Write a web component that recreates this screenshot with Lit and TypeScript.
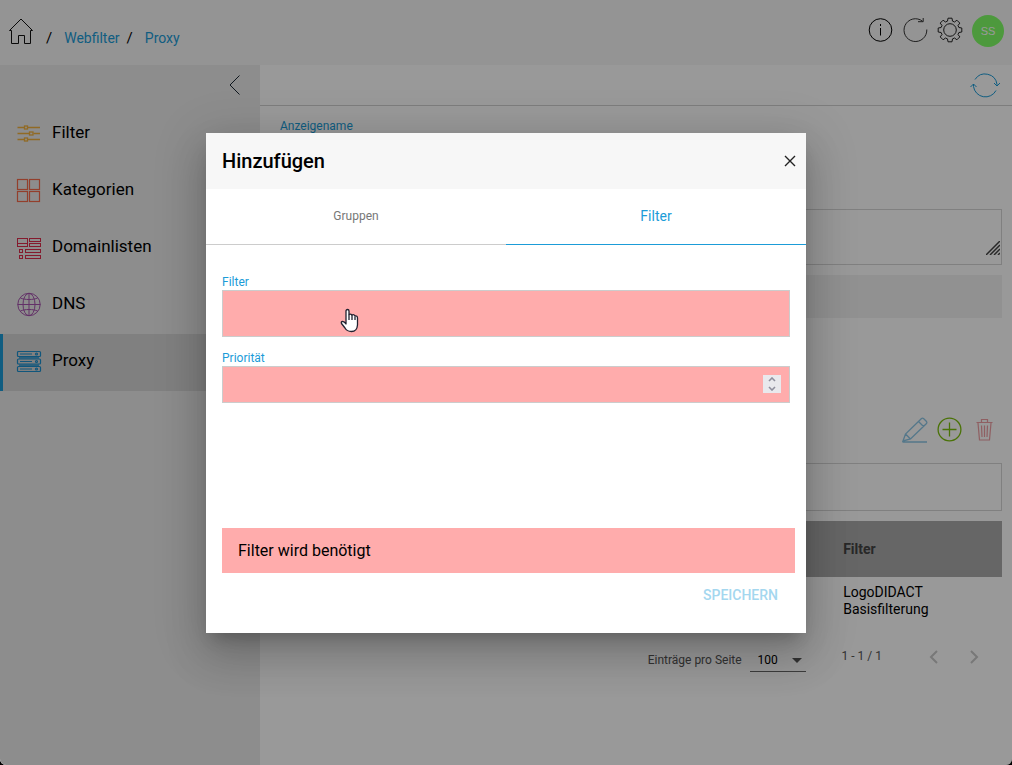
import { LitElement, html, css, svg } from "lit";
import { customElement, state } from "lit/decorators.js";
import { classMap } from "lit/directives/class-map.js";

const navIcons = {
  filter: svg`<g stroke="#f2b13c" stroke-width="1.3"><path d="M1.500 6.500H8M12 6.500H24M1.500 12.500H13.500M17.500 12.500H24M1.500 18.500H8M12 18.500H24"/><rect x="8.500" y="5" width="3" height="3"/><rect x="13.500" y="11" width="3.500" height="3"/><rect x="8.500" y="17" width="3" height="3"/></g>`,
  categories: svg`<g stroke="#f5694a" stroke-width="1.2"><rect x="1.5" y="1.5" width="10" height="10"/><rect x="13.5" y="1.5" width="10" height="10"/><rect x="1.5" y="13.5" width="10" height="10"/><rect x="13.5" y="13.5" width="10" height="10"/></g>`,
  domains: svg`<g stroke="#dc2c4c"><rect x="1.5" y="3.5" width="10" height="8"/><path d="M2 8l1 1 1-1 1 1 1-1 1 1 1-1 1 1 1-1 1 1"/><rect x="13.5" y="3.5" width="11" height="3"/><rect x="13.5" y="8.5" width="11" height="3"/><rect x="3.5" y="14.5" width="3" height="3"/><rect x="9.5" y="14.5" width="15" height="3"/><rect x="3.5" y="20.5" width="3" height="3"/><rect x="9.5" y="20.5" width="15" height="3"/></g>`,
  dns: svg`<g stroke="#a552ad"><circle cx="13" cy="12.5" r="11.200"/><ellipse cx="13" cy="12.5" rx="6" ry="11.200"/><path d="M13 1.5v22M1.500 12.500h23M4.500 6c4 2 13 2 17 0M4.500 19c4-2 13-2 17 0"/></g>`,
  proxy: svg`<g stroke="#1b90cf" stroke-width="1.2"><rect x="1.5" y="2.5" width="23" height="5" rx="1"/><rect x="1.5" y="10" width="23" height="5" rx="1"/><rect x="1.5" y="17.5" width="23" height="5" rx="1"/><path d="M4 5h12M4 12.5h12M4 20h12M3 8.8h20M3 16.2h20"/><circle cx="20.5" cy="5" r="1"/><circle cx="20.5" cy="12.5" r="1"/><circle cx="20.5" cy="20" r="1"/></g>`,
};

const navItems = [
  { label: "Filter", icon: navIcons.filter },
  { label: "Kategorien", icon: navIcons.categories },
  { label: "Domainlisten", icon: navIcons.domains },
  { label: "DNS", icon: navIcons.dns },
  { label: "Proxy", icon: navIcons.proxy, active: true },
];

const gear = (() => {
  const teeth = 8;
  const points: string[] = [];
  for (let i = 0; i < teeth; i++) {
    const base = (i * 2 * Math.PI) / teeth;
    for (const [offset, radius] of [[-0.27, 9.2], [-0.17, 12], [0.17, 12], [0.27, 9.2]]) {
      const a = base + offset;
      points.push(`${(13 + radius * Math.sin(a)).toFixed(1)} ${(13 - radius * Math.cos(a)).toFixed(1)}`);
    }
  }
  return `M${points.join("L")}Z`;
})();

@customElement("app-root")
export class AppRoot extends LitElement {
  @state() private tab = "Filter";

  static styles = css`
    :host {
      display: block;
      background: #000;
      font-family: Roboto, "Liberation Sans", sans-serif;
      font-size: 14px;
      line-height: 20px;
      color: #000;
    }
    *, *::before, *::after { box-sizing: border-box; }
    button, input, select, textarea { font: inherit; color: inherit; margin: 0; border-radius: 0; }
    button { background: none; border: 0; padding: 0; cursor: pointer; }
    a { color: inherit; text-decoration: none; }
    svg { display: block; fill: none; stroke-width: 1; flex: none; }

    .page {
      position: relative;
      display: flex;
      flex-direction: column;
      min-height: 100vh;
      background: #fff;
      border-radius: 0 0 6px 6px;
      overflow: hidden;
    }
    .topbar {
      display: flex;
      align-items: center;
      justify-content: space-between;
      height: 65px;
      padding: 0 8px;
      background: #f7f7f7;
    }
    .crumbs { display: flex; align-items: center; padding-bottom: 2px; }
    .crumbs ol { display: flex; list-style: none; margin: 0; padding: 12px 0 0; }
    .crumbs li { color: #1b9cd8; }
    .crumbs li::before { content: "/"; color: #000; font-size: 15px; padding: 0 12px; }
    .crumbs li + li::before { padding-left: 7px; }
    .tools { display: flex; align-items: center; gap: 9px; padding-bottom: 4px; }
    .tools button { padding-bottom: 2px; }
    .tools .avatar {
      width: 32px;
      height: 32px;
      padding: 0;
      border-radius: 50%;
      background: #80ff66;
      color: #fff;
      font-family: "Liberation Sans", sans-serif;
      font-size: 11px;
    }
    .columns { display: flex; flex: 1; }
    .sidebar { width: 260px; background: #ebebeb; }
    .collapse { display: flex; justify-content: flex-end; align-items: flex-start; height: 41px; padding: 9px 18px 0 0; }
    .nav-item {
      display: flex;
      align-items: center;
      gap: 9px;
      height: 57px;
      padding: 0 0 2px 13px;
      border-left: 3px solid transparent;
      font-size: 17px;
    }
    .nav-item span { padding-bottom: 3px; }
    .nav-item.active { background: #d5d5d5; border-color: #1b9cd8; }

    .content { flex: 1; min-width: 0; }
    .toolbar { display: flex; justify-content: flex-end; align-items: center; height: 41px; padding-right: 12px; border-bottom: 1px solid #d0d0d0; }
    .form { display: flex; flex-direction: column; padding: 10px 10px 0 20px; }
    .label { color: #1b9cd8; font-size: 12px; line-height: 20px; }
    .box { display: block; width: 100%; border: 1px solid #d5d5d5; background: #fff; padding: 8px; }
    .name { width: 50%; height: 48px; margin-bottom: 25px; }
    .note { height: 56px; resize: none; }
    .note-wrap { position: relative; margin-bottom: 10px; }
    .grip { position: absolute; right: 2px; bottom: 10px; }
    .band { height: 43px; background: #f2f2f2; }
    .actions { display: flex; justify-content: flex-end; gap: 9px; padding: 99px 4px 20px 0; }
    .faded { opacity: .5; }
    .search { height: 48px; margin-bottom: 10px; }
    table { width: 100%; border-collapse: collapse; table-layout: fixed; text-align: left; }
    col.wide { width: 78%; }
    th { height: 56px; padding: 0; background: #aaa; color: #444; font-weight: 700; }
    td { height: 48px; padding: 0 24px 0 0; line-height: 17px; }
    .pager { display: flex; align-items: center; justify-content: flex-end; height: 64px; padding-right: 8px; font-size: 12px; color: #555; }
    .size { position: relative; display: flex; align-items: center; width: 56px; margin: 5px 36px 0 8px; border-bottom: 1px solid #666; color: #000; }
    .size select { appearance: none; width: 100%; height: 24px; padding: 1px 8px 0; border: 0; background: none; }
    .size svg { position: absolute; right: 4px; bottom: 8px; fill: #555; pointer-events: none; }
    .size-label { padding-top: 6px; }
    .range { margin-right: 32px; padding-bottom: 2px; }
    .pager button { display: grid; place-items: center; width: 40px; height: 40px; }

    .overlay {
      position: absolute;
      inset: 0;
      display: flex;
      align-items: center;
      justify-content: center;
      background: rgba(0, 0, 0, .4);
    }
    .dialog {
      width: 600px;
      max-width: 80vw;
      min-height: 500px;
      display: flex;
      flex-direction: column;
      background: #fff;
      box-shadow: 0 11px 15px -7px rgba(0, 0, 0, .2), 0 24px 38px 3px rgba(0, 0, 0, .14), 0 9px 46px 8px rgba(0, 0, 0, .12);
    }
    .dialog header {
      display: flex;
      align-items: center;
      justify-content: space-between;
      height: 56px;
      padding: 0 10px 0 16px;
      background: #f7f7f7;
    }
    h2 { margin: 0; font-size: 20px; font-weight: 500; line-height: 28px; }
    .tabs { display: flex; }
    .tab { flex: 1; height: 56px; border-bottom: 1px solid #ccc; color: #777; font-size: 12px; }
    .tab.current { color: #1b9cd8; font-size: 14px; border-color: #1b9cd8; }
    .fields { display: flex; flex-direction: column; padding: 29px 16px 0; }
    .fields label { color: #1b9cd8; font-size: 12px; line-height: 16px; }
    .field { position: relative; display: flex; align-items: center; border: 1px solid #ccc; background: #ffacac; }
    .field.pick { height: 47px; margin-bottom: 13px; }
    .field.count { height: 37px; padding-right: 8px; }
    .field select, .field input { flex: 1; min-width: 0; height: 100%; appearance: none; border: 0; outline: 0; background: none; padding: 0 8px; }
    .field input::-webkit-inner-spin-button { display: none; }
    .spin { display: flex; flex-direction: column; width: 18px; height: 18px; background: #e9e9ed; }
    .spin button { flex: 1; display: grid; place-items: center; }
    .hand { position: absolute; left: 117px; top: 17px; pointer-events: none; }
    .foot { margin-top: auto; padding: 0 11px 20px 16px; }
    .alert { margin: 0; padding: 13px 16px 12px; background: #ffacac; font-size: 16px; }
    .save { display: flex; justify-content: flex-end; padding: 4px 1px 0 0; }
    .save button { height: 36px; padding: 0 16px; color: #a4d7ef; font-weight: 500; }
  `;

  render() {
    return html`
      <div class="page">
        <header class="topbar">
          <nav class="crumbs">
            <a href="#" aria-label="Home"><svg width="26" height="28" viewBox="0 1 26 28" stroke="#111" stroke-width="1.2"><path d="M1.500 13.500L13 2l11.500 11.500H22.500V26.500H16.500V18.500H10.500V26.500H3.500V13.500Z"/></svg></a>
            <ol>
              <li><a href="#">Webfilter</a></li>
              <li><a href="#">Proxy</a></li>
            </ol>
          </nav>
          <div class="tools">
            <button aria-label="Info"><svg width="26" height="26" viewBox="0 0 26 26" stroke="#000" stroke-width="1.3"><circle cx="13.500" cy="13" r="11.300"/><path d="M13.500 11v7.500M13.500 7v2"/></svg></button>
            <button aria-label="Reload"><svg width="26" height="26" viewBox="0 0 26 26" stroke="#333"><path d="M24.800 12.500A11.400 11.400 0 1 1 20.500 4.200M16 4.700H21.200V1"/></svg></button>
            <button aria-label="Settings"><svg width="26" height="26" viewBox="0 0 26 26" stroke="#222"><path stroke-linejoin="round" d=${gear}/><circle cx="13" cy="13" r="6.300"/></svg></button>
            <button class="avatar">SS</button>
          </div>
        </header>
        <div class="columns">
          <aside class="sidebar">
            <div class="collapse">
              <button aria-label="Collapse"><svg width="14" height="22" viewBox="0 0 14 22" stroke="#1a2733" stroke-width="1.3"><path d="M11.500 1.500L2 11l9.500 9.500"/></svg></button>
            </div>
            <nav>
              ${navItems.map((item) => html`
                <a href="#" class=${classMap({ "nav-item": true, active: !!item.active })}>
                  <svg width="27" height="26" viewBox="0 0 27 26">${item.icon}</svg><span>${item.label}</span>
                </a>`)}
            </nav>
          </aside>
          <main class="content">
            <div class="toolbar">
              <button aria-label="Refresh"><svg width="30" height="28" viewBox="0 0 30 28" stroke="#1b9cd8" stroke-width="1.3"><path d="M5 8.500A12 12 0 0 1 27 13.500V15M24 12l3 3 3-3M26 19.500A12 12 0 0 1 3.500 15.500V13M.500 16l3-3 3 3"/></svg></button>
            </div>
            <div class="form">
              <label class="label" for="name">Anzeigename</label>
              <input class="box name" id="name">
              <div class="note-wrap">
                <textarea class="box note" aria-label="Note"></textarea>
                <svg class="grip" width="14" height="14" viewBox="0 0 14 14" stroke="#444"><path stroke-width="1.5" d="M0 14L14 0M4 14L14 4M8 14l6-6M12 14l2-2"/></svg>
              </div>
              <div class="band"></div>
              <div class="actions">
                <button class="faded" aria-label="Edit"><svg width="26" height="26" viewBox="1 0 26 26" stroke="#1b90cf"><path stroke-width="1.3" d="M1.500 25H26M2 24L4.500 17L20.500 1.500Q21.500 .700 22.500 1.500L25.500 4.500Q26.200 5.500 25.500 6.500L9.500 22ZM4.500 17L9.500 22M17.500 4.500L22.500 9.500"/></svg></button>
                <button aria-label="Add"><svg width="26" height="26" viewBox="0 0 26 26" stroke="#7cbf0c"><circle stroke-width="1.300" cx="12.500" cy="12.500" r="11.400"/><path stroke-width="1.300" d="M12.500 5.500v14M5.500 12.500h14"/></svg></button>
                <button class="faded" aria-label="Delete"><svg width="26" height="26" viewBox="0 0 26 26" stroke="#e0404a"><path stroke-width="1.200" d="M4.500 5.500h16M9.500 5V2.500h6V5M6 6l1.500 17h10L19 6M9.500 8.500l.500 11.500M12.500 8.500V20M15.500 8.500L15 20"/></svg></button>
              </div>
              <input class="box search" aria-label="Search">
              <table>
                <colgroup><col class="wide"><col></colgroup>
                <thead><tr><th></th><th scope="col">Filter</th></tr></thead>
                <tbody><tr><td></td><td>LogoDIDACT Basisfilterung</td></tr></tbody>
              </table>
              <div class="pager">
                <label class="size-label" for="size">Einträge pro Seite</label>
                <span class="size">
                  <select id="size"><option>100</option></select>
                  <svg width="10" height="5" viewBox="0 0 10 5"><path d="M0 0h10L5 5z"/></svg>
                </span>
                <span class="range">1 - 1 / 1</span>
                <button aria-label="Previous"><svg width="10" height="14" viewBox="0 0 10 14" stroke="#c8c8c8"><path stroke-width="2" d="M8 1L2 7l6 6"/></svg></button>
                <button aria-label="Next"><svg width="10" height="14" viewBox="0 0 10 14" stroke="#c8c8c8"><path stroke-width="2" d="M2 1l6 6-6 6"/></svg></button>
              </div>
            </div>
          </main>
        </div>

        <div class="overlay">
          <section class="dialog" role="dialog" aria-labelledby="title">
            <header>
              <h2 id="title">Hinzufügen</h2>
              <button aria-label="Close"><svg width="12" height="12" viewBox="0 0 12 12" stroke="#222"><path stroke-width="1.4" d="M1 1l10 10M11 1L1 11"/></svg></button>
            </header>
            <div class="tabs" role="tablist">
              ${["Gruppen", "Filter"].map((name) => html`
                <button role="tab" class=${classMap({ tab: true, current: this.tab === name })} @click=${() => (this.tab = name)}>${name}</button>`)}
            </div>
            <div class="fields">
              <label for="filter">Filter</label>
              <div class="field pick">
                <select id="filter"></select>
                <svg class="hand" width="20" height="26" viewBox="0 0 20 26" stroke="#222230" stroke-linejoin="round"><path fill="#fff" stroke-width="1.3" d="M6 15V3Q6 1.500 7.500 1.500T9 3V6.500Q10.500 5.500 12 7Q14 6 15 8Q17.500 7.500 17.500 10V17Q17 23.500 11.500 23.500Q7 23.500 5 20L1.500 15.500Q.800 13.500 2.500 13.300Q4.500 13.500 6 16Z"/><path stroke-width="1.300" d="M9 6.500V12M12 7V12M15 8.500V12"/></svg>
              </div>
              <label for="priority">Priorität</label>
              <div class="field count">
                <input id="priority" type="number">
                <span class="spin">
                  <button aria-label="Up"><svg width="8" height="5" viewBox="0 0 8 5" stroke="#8f8f9d"><path stroke-width="1.600" d="M1 4l3-3 3 3"/></svg></button>
                  <button aria-label="Down"><svg width="8" height="5" viewBox="0 0 8 5" stroke="#8f8f9d"><path stroke-width="1.600" d="M1 1l3 3 3-3"/></svg></button>
                </span>
              </div>
            </div>
            <div class="foot">
              <p class="alert" role="alert">Filter wird benötigt</p>
              <div class="save"><button disabled>SPEICHERN</button></div>
            </div>
          </section>
        </div>
      </div>
    `;
  }
}
